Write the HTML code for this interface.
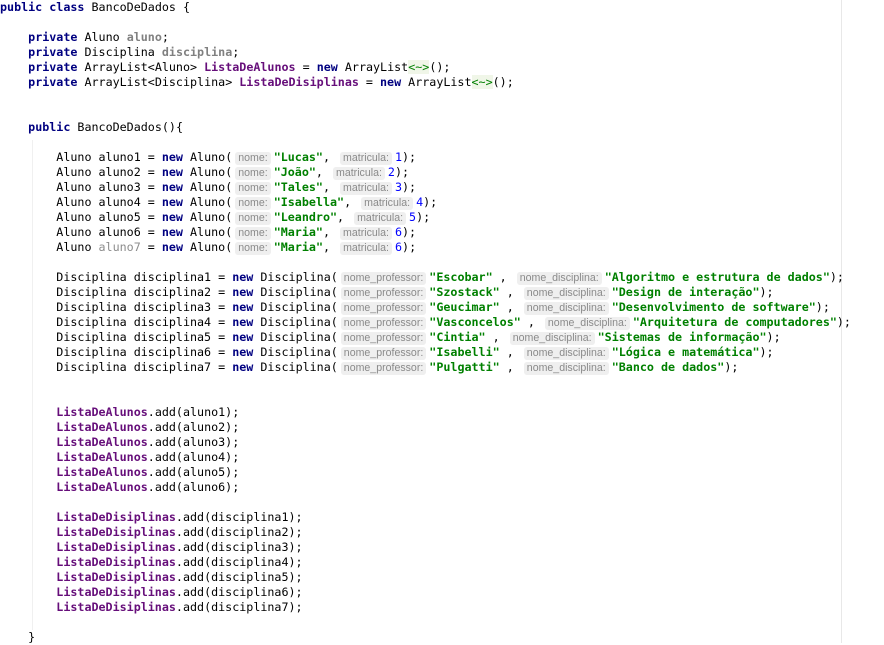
<!DOCTYPE html>
<html><head><meta charset="utf-8"><style>
body{margin:0;background:#fff;width:884px;height:643px;overflow:hidden;position:relative}
pre{margin:0;font-family:"DejaVu Sans Mono","Liberation Mono",monospace;font-size:11.7px;line-height:15px;color:#000;position:absolute;left:0;top:0}
.k{color:#000080;font-weight:bold}
.f{color:#660e7a;font-weight:bold}
.u{color:#808080;font-weight:bold}
.s{color:#008000;font-weight:bold}
.n{color:#0000ff}
.g{color:#8c8c8c}
.d{color:#008000;background:#f0f6e8}
.h{font-family:"Liberation Sans","DejaVu Sans",sans-serif;font-size:10.6px;color:#8a8a8a;background:#efefef;border-radius:3px;padding:0 3px;margin:0 3px 0 3px;display:inline-block;line-height:13px}
.m{position:absolute;left:841px;top:0;width:1px;height:643px;background:#e8e8e8}
.i{position:absolute;left:32px;top:140px;width:1px;height:490px;background:#f0f0f0}
</style></head><body>
<div class="m"></div><div class="i"></div>
<pre><span class="k">public class</span> BancoDeDados {

    <span class="k">private</span> Aluno <span class="u">aluno</span>;
    <span class="k">private</span> Disciplina <span class="u">disciplina</span>;
    <span class="k">private</span> ArrayList&lt;Aluno&gt; <span class="f">ListaDeAlunos</span> = <span class="k">new</span> ArrayList<span class="d">&lt;~&gt;</span>();
    <span class="k">private</span> ArrayList&lt;Disciplina&gt; <span class="f">ListaDeDisiplinas</span> = <span class="k">new</span> ArrayList<span class="d">&lt;~&gt;</span>();


    <span class="k">public</span> BancoDeDados(){

        Aluno aluno1 = <span class="k">new</span> Aluno(<span class="h">nome:</span><span class="s">"Lucas"</span>, <span class="h">matricula:</span><span class="n">1</span>);
        Aluno aluno2 = <span class="k">new</span> Aluno(<span class="h">nome:</span><span class="s">"João"</span>, <span class="h">matricula:</span><span class="n">2</span>);
        Aluno aluno3 = <span class="k">new</span> Aluno(<span class="h">nome:</span><span class="s">"Tales"</span>, <span class="h">matricula:</span><span class="n">3</span>);
        Aluno aluno4 = <span class="k">new</span> Aluno(<span class="h">nome:</span><span class="s">"Isabella"</span>, <span class="h">matricula:</span><span class="n">4</span>);
        Aluno aluno5 = <span class="k">new</span> Aluno(<span class="h">nome:</span><span class="s">"Leandro"</span>, <span class="h">matricula:</span><span class="n">5</span>);
        Aluno aluno6 = <span class="k">new</span> Aluno(<span class="h">nome:</span><span class="s">"Maria"</span>, <span class="h">matricula:</span><span class="n">6</span>);
        Aluno <span class="g">aluno7</span> = <span class="k">new</span> Aluno(<span class="h">nome:</span><span class="s">"Maria"</span>, <span class="h">matricula:</span><span class="n">6</span>);

        Disciplina disciplina1 = <span class="k">new</span> Disciplina(<span class="h">nome_professor:</span><span class="s">"Escobar"</span> , <span class="h">nome_disciplina:</span><span class="s">"Algoritmo e estrutura de dados"</span>);
        Disciplina disciplina2 = <span class="k">new</span> Disciplina(<span class="h">nome_professor:</span><span class="s">"Szostack"</span> , <span class="h">nome_disciplina:</span><span class="s">"Design de interação"</span>);
        Disciplina disciplina3 = <span class="k">new</span> Disciplina(<span class="h">nome_professor:</span><span class="s">"Geucimar"</span> , <span class="h">nome_disciplina:</span><span class="s">"Desenvolvimento de software"</span>);
        Disciplina disciplina4 = <span class="k">new</span> Disciplina(<span class="h">nome_professor:</span><span class="s">"Vasconcelos"</span> , <span class="h">nome_disciplina:</span><span class="s">"Arquitetura de computadores"</span>);
        Disciplina disciplina5 = <span class="k">new</span> Disciplina(<span class="h">nome_professor:</span><span class="s">"Cintia"</span> , <span class="h">nome_disciplina:</span><span class="s">"Sistemas de informação"</span>);
        Disciplina disciplina6 = <span class="k">new</span> Disciplina(<span class="h">nome_professor:</span><span class="s">"Isabelli"</span> , <span class="h">nome_disciplina:</span><span class="s">"Lógica e matemática"</span>);
        Disciplina disciplina7 = <span class="k">new</span> Disciplina(<span class="h">nome_professor:</span><span class="s">"Pulgatti"</span> , <span class="h">nome_disciplina:</span><span class="s">"Banco de dados"</span>);


        <span class="f">ListaDeAlunos</span>.add(aluno1);
        <span class="f">ListaDeAlunos</span>.add(aluno2);
        <span class="f">ListaDeAlunos</span>.add(aluno3);
        <span class="f">ListaDeAlunos</span>.add(aluno4);
        <span class="f">ListaDeAlunos</span>.add(aluno5);
        <span class="f">ListaDeAlunos</span>.add(aluno6);

        <span class="f">ListaDeDisiplinas</span>.add(disciplina1);
        <span class="f">ListaDeDisiplinas</span>.add(disciplina2);
        <span class="f">ListaDeDisiplinas</span>.add(disciplina3);
        <span class="f">ListaDeDisiplinas</span>.add(disciplina4);
        <span class="f">ListaDeDisiplinas</span>.add(disciplina5);
        <span class="f">ListaDeDisiplinas</span>.add(disciplina6);
        <span class="f">ListaDeDisiplinas</span>.add(disciplina7);

    }
</pre>
</body></html>
